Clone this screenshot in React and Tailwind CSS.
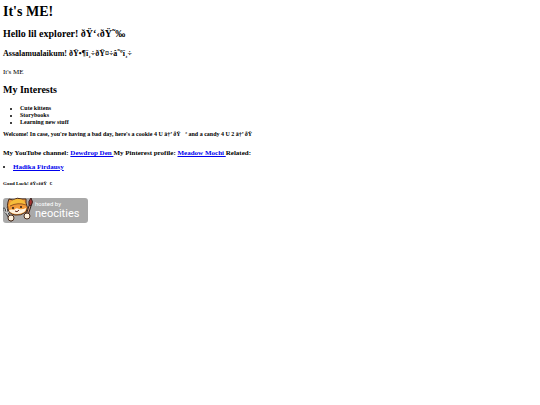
import React from 'react';

const interests = ['Cute kittens', 'Storybooks', 'Learning new stuff'];

const NeocitiesBadge = () => (
  <svg viewBox="0 0 85 26" className="block w-[85px] h-[26px]" role="img" aria-label="Hosted by Neocities">
    <rect x="0" y="1" width="85" height="25" rx="3" fill="#a9a9a9" />
    {/* fork */}
    <g strokeLinecap="round" fill="none">
      <path d="M1 12l3 4M5 11l0 5M4 16l4 7" stroke="#444" strokeWidth="3" />
      <path d="M1 12q0 4 4 4 2-2 0-5M3 11l1 4M4 16l4 7" stroke="#eee" strokeWidth="1" />
    </g>
    {/* paint brush */}
    <path d="M27 9l-3 9" stroke="#3a2622" strokeWidth="3" strokeLinecap="round" />
    <path d="M27 9l-3 9" stroke="#d9a07a" strokeWidth="1" />
    <path d="M28 1q3 4 0 8l-2-1q-1-4 2-7z" fill="#a4312f" stroke="#3a2622" strokeWidth="1" />
    {/* cat */}
    <path d="M5 5l1-3 4 1q4-3 9-1l4 0 0 4q3 5 0 9-5 4-11 3-6-1-7-6-1-4 0-7z" fill="#f29a38" stroke="#4a2c1c" strokeWidth="1" />
    <path d="M6 9q1-6 8-7 7-1 9 6-8-3-17 1z" fill="#f6bd3a" />
    <path d="M7 9q8-4 16-1" stroke="#9a5a20" strokeWidth="1" fill="none" />
    <path d="M6 13q3-1 5 0 2-3 5-1 3 1 7-1 0 4-4 5-5 2-10 0-3-1-3-3z" fill="#fff3df" />
    <circle cx="10" cy="11" r="1" fill="#2b1d1a" />
    <circle cx="18" cy="10" r="1" fill="#2b1d1a" />
    <path d="M12 14q2 2 4-1" stroke="#5b2018" strokeWidth="1" fill="none" />
    {/* paws */}
    <circle cx="8" cy="21" r="3" fill="#fff3df" stroke="#4a2c1c" strokeWidth="1" />
    <circle cx="24" cy="19" r="3" fill="#fff3df" stroke="#4a2c1c" strokeWidth="1" />
    <text x="32" y="9" fontSize="6" fill="#fff" className="font-['Roboto',sans-serif]">hosted by</text>
    <text x="32" y="20" fontSize="11" fill="#fff" className="font-['Roboto',sans-serif]">neocities</text>
  </svg>
);

const App = () => {
  return (
    <main className="px-[3px] pt-1 bg-white text-black font-['Liberation_Serif',serif]">
      <h1 className="text-[14px] leading-4 font-bold">It's ME!</h1>
      <h2 className="mt-2 text-[10px] leading-3 font-bold">Hello lil explorer! ðŸ‘‹ðŸ˜‰</h2>
      <h3 className="mt-[9px] text-[8px] leading-[10px] font-bold">Assalamualaikum! ðŸ•¶ï¸÷ðŸ¤÷â˜ºï¸÷</h3>
      <p className="mt-[9px] text-[7px] leading-2">It's ME</p>

      <h2 className="mt-2 text-[10px] leading-3 font-bold">My Interests</h2>
      <ul className="mt-[9px] pl-[17px] list-disc text-[6px] leading-[7px] font-bold">
        {interests.map((interest) => (
          <li key={interest}>{interest}</li>
        ))}
      </ul>

      <h5 className="mt-[5px] text-[6px] leading-[7px] font-bold whitespace-pre">
        Welcome! In case, you're having a bad day, here's a cookie 4 U â†’ ðŸ   ª and a candy 4 U 2 â†’ ðŸ
      </h5>

      <h4 className="mt-[11px] text-[7px] leading-2 font-bold">
        My YouTube channel:{' '}
        <a href="#youtube" className="text-[#0000ee] underline">Dewdrop Den </a>
        My Pinterest profile:{' '}
        <a href="#pinterest" className="text-[#0000ee] underline">Meadow Mochi </a>
        Related:
      </h4>
      <ul className="mt-[6px] list-disc list-inside text-[7px] leading-2 font-bold">
        <li>
          <a href="#hadika" className="text-[#0000ee] underline">Hadika Firdausy</a>
        </li>
      </ul>

      <h6 className="mt-[10px] text-[5px] leading-[6px] font-bold whitespace-pre">Good Luck! ðŸ¤žðŸ  €</h6>

      <a href="#neocities" className="mt-[10px] block w-fit">
        <NeocitiesBadge />
      </a>
    </main>
  );
};

export default App;
